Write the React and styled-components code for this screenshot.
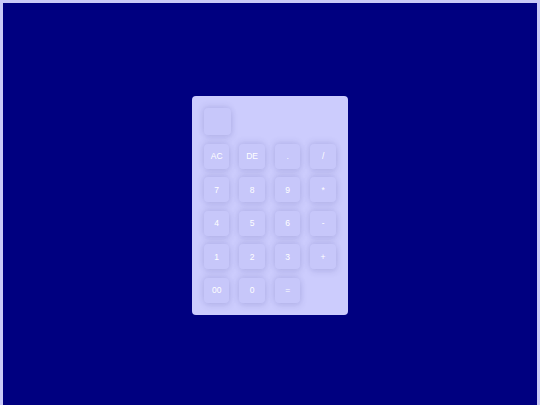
import React, { useState } from "react";
import styled, { createGlobalStyle } from "styled-components";

const GlobalStyle = createGlobalStyle`
  html {
    background: #c9c9f7;
  }
  body {
    margin: 3px;
    font-family: "Liberation Sans", Arial, sans-serif;
  }
`;

const Page = styled.div`
  height: 100vh;
  background: #000080;
  display: flex;
  align-items: center;
  justify-content: center;
`;

const Calculator = styled.div`
  width: 156px;
  box-sizing: border-box;
  padding: 12px;
  background: #ccccfd;
  border-radius: 4px;
  display: grid;
  grid-template-columns: repeat(4, 25.3px);
  grid-auto-rows: 25px;
  grid-template-rows: 27px;
  column-gap: 10.2px;
  row-gap: 8.5px;
`;

const Display = styled.div`
  width: 27px;
  height: 27px;
  grid-column: 1 / -1;
  box-sizing: border-box;
  border-radius: 4px;
  background: #c7c7fa;
  box-shadow: -1px -2px 6px rgba(60, 60, 140, 0.13),
    1px 3px 6px rgba(60, 60, 140, 0.13);
  color: #ffffff;
  font-size: 8px;
  display: flex;
  align-items: center;
  justify-content: flex-end;
  padding: 0 4px;
  overflow: hidden;
`;

const Key = styled.button`
  border: none;
  padding: 0;
  margin: 0;
  border-radius: 4px;
  background: #c7c7fa;
  box-shadow: -1px -2px 6px rgba(60, 60, 140, 0.13),
    1px 3px 6px rgba(60, 60, 140, 0.13);
  color: #ffffff;
  font-family: "Liberation Sans", Arial, sans-serif;
  font-size: 8.5px;
  line-height: 1;
  cursor: pointer;
  display: flex;
  align-items: center;
  justify-content: center;
  outline: none;
`;

const keys = [
  "AC", "DE", ".", "/",
  "7", "8", "9", "*",
  "4", "5", "6", "-",
  "1", "2", "3", "+",
  "00", "0", "=",
];

export default function App() {
  const [value, setValue] = useState("");

  const press = (k) => {
    if (k === "AC") return setValue("");
    if (k === "DE") return setValue((v) => v.slice(0, -1));
    if (k === "=") {
      try {
        // eslint-disable-next-line no-new-func
        setValue(String(Function(`return (${value || 0})`)()));
      } catch (e) {
        setValue("");
      }
      return;
    }
    setValue((v) => v + k);
  };

  return (
    <>
      <GlobalStyle />
      <Page>
        <Calculator>
          <Display>{value}</Display>
          {keys.map((k) => (
            <Key key={k} onClick={() => press(k)}>
              {k}
            </Key>
          ))}
        </Calculator>
      </Page>
    </>
  );
}
